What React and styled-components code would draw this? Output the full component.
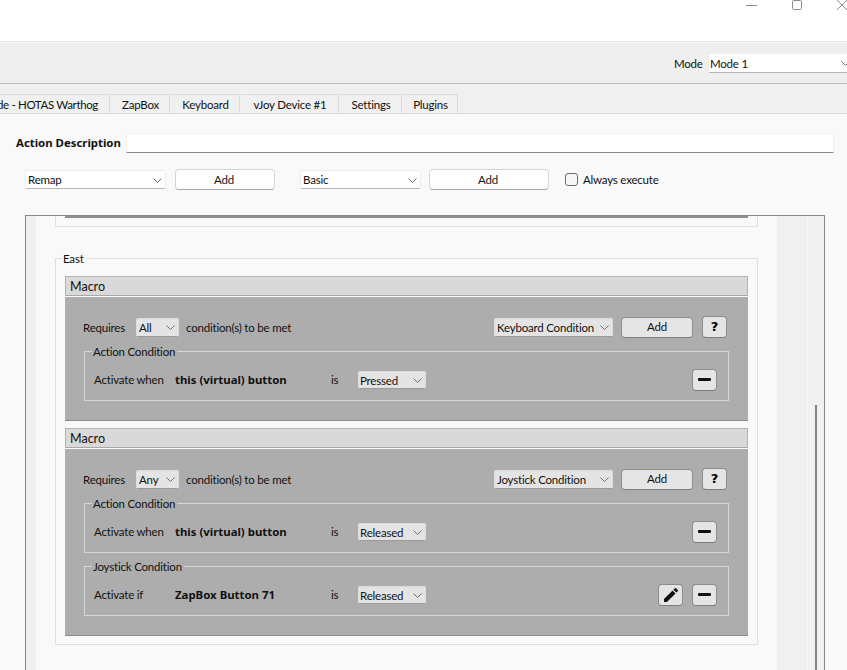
import React from "react";
import styled, { createGlobalStyle } from "styled-components";

const GlobalStyle = createGlobalStyle`
  html, body {
    margin: 0;
    padding: 0;
    background: #fff;
  }
  * {
    box-sizing: border-box;
  }
`;

const Window = styled.div`
  display: flex;
  flex-direction: column;
  width: 847px;
  height: 670px;
  overflow: hidden;
  background: #fff;
  color: #111;
  font-family: "Lato", "Noto Sans", sans-serif;
  font-size: 11.5px;
  letter-spacing: -0.2px;
  line-height: 16px;
`;

const TitleBar = styled.div`
  flex: none;
  display: flex;
  justify-content: flex-end;
  height: 42px;
  gap: 35px;
  border-bottom: 1px solid #e9e9e9;
`;

const TitleIcon = styled.svg`
  display: block;
  width: ${props => props.$w}px;
  height: 12px;
  flex: none;
  stroke: #8c8c8c;
  stroke-width: 1;
  fill: none;
`;

const Toolbar = styled.div`
  flex: none;
  display: flex;
  align-items: flex-start;
  height: 42px;
  padding: 10px 0 0 674px;
  gap: 7px;
  background: #efefef;
  border-top: 1px solid #f8f8f8;
  border-bottom: 1px solid #bcbcbc;
`;

const ModeLabel = styled.span`
  flex: none;
  width: 27px;
  line-height: 21px;
`;

const TabStrip = styled.div`
  flex: none;
  display: flex;
  align-items: flex-end;
  height: 29px;
  background: #f0f0f0;
`;

const Tab = styled.div`
  display: flex;
  align-items: center;
  justify-content: center;
  width: ${props => props.$w}px;
  height: 19px;
  margin-left: 1px;
  padding: 1px 0 0 1px;
  background: #f0f0f0;
  border: 1px solid #dcdcdc;
  border-bottom: 0;
  border-left: 0;
  white-space: nowrap;
`;

const ClippedTab = styled(Tab)`
  justify-content: flex-end;
  margin-left: 0;
  padding: 1px 11px 0 0;
  letter-spacing: -0.35px;
`;

const Pane = styled.div`
  flex: 1;
  min-height: 0;
  display: flex;
  flex-direction: column;
  background: #f9f9f9;
  border-top: 1px solid #dadada;
  padding-top: 19px;
`;

const DescriptionRow = styled.div`
  display: flex;
  align-items: center;
  height: 20px;
  padding-left: 16px;
`;

const BoldLabel = styled.span`
  display: block;
  width: ${props => props.$w || 110}px;
  flex: none;
  font-family: "Noto Sans", sans-serif;
  font-size: 11.4px;
  font-weight: 700;
  letter-spacing: 0;
  white-space: nowrap;
`;

const DescriptionInput = styled.div`
  width: 708px;
  height: 20px;
  background: #fff;
  border: 1px solid #f0f0f0;
  border-bottom: 1px solid #8a8a8a;
  border-radius: 2px 2px 0 0;
`;

const AddRow = styled.div`
  display: flex;
  align-items: center;
  height: 21px;
  margin-top: 16px;
  padding-left: 25px;
`;

const DropDown = styled.div`
  flex: none;
  display: flex;
  align-items: center;
  justify-content: space-between;
  width: ${props => props.$w}px;
  height: ${props => props.$h || 19}px;
  margin-left: ${props => props.$ml || 0}px;
  padding: ${props => props.$pt || 1}px 3px 0 ${props => props.$pl || 2}px;
  background: ${props => (props.$flat ? "#e4e4e4" : "#fff")};
  border: 1px solid ${props => (props.$flat ? "#dcdcdc" : "#ececec")};
  border-bottom-color: ${props => (props.$flat ? "#9a9a9a" : "#b5b5b5")};
  border-radius: 2px;
  white-space: nowrap;
`;

const Chevron = styled.svg`
  flex: none;
  width: 9px;
  height: 5px;
  stroke: #707070;
  stroke-width: 1;
  fill: none;
`;

const Button = styled.div`
  flex: none;
  display: flex;
  align-items: center;
  justify-content: center;
  width: ${props => props.$w}px;
  height: ${props => props.$h || 22}px;
  margin-left: ${props => props.$ml || 0}px;
  padding-right: ${props => (props.$flat ? 0 : 2)}px;
  background: ${props => (props.$flat ? "#e5e5e5" : "#fff")};
  border: 1px solid ${props => (props.$flat ? "#8e8e8e" : "#d4d4d4")};
  border-bottom-color: ${props => (props.$flat ? "#7d7d7d" : "#a6a6a6")};
  border-radius: 4px;
`;

const CheckBox = styled.div`
  flex: none;
  width: 13px;
  height: 13px;
  margin: 0 5px 0 16px;
  background: #f6f6f6;
  border: 1px solid #6c6c6c;
  border-radius: 3px;
`;

const ScrollFrame = styled.div`
  flex: none;
  display: flex;
  width: 800px;
  height: 460px;
  margin: 25px 0 0 25px;
  background: #f0f0f0;
  border: 1px solid #87878c;
  border-bottom: 0;
`;

const Gutter = styled.div`
  flex: none;
  width: 10px;
`;

const Viewport = styled.div`
  flex: none;
  width: 741px;
  padding-left: 19px;
  background: #f9f9f9;
`;

const ScrollBar = styled.div`
  flex: none;
  position: relative;
  width: 47px;
`;

const ScrollDivider = styled.div`
  position: absolute;
  top: 0;
  bottom: 0;
  left: 30px;
  width: 1px;
  background: #fafafa;
`;

const ScrollThumb = styled.div`
  position: absolute;
  top: 189px;
  bottom: 0;
  left: 38px;
  width: 2px;
  background: #858585;
`;

const PreviousGroup = styled.div`
  width: 703px;
  height: 11px;
  padding: 0 9px;
  border: 1px solid #e0e0e0;
  border-top: 0;
`;

const PreviousBar = styled.div`
  height: 2px;
  background: #8f8f8f;
`;

const GroupBox = styled.div`
  position: relative;
  width: 703px;
  height: 387px;
  margin-top: 31px;
  padding: 17px 9px 0;
  border: 1px solid #e0e0e0;
`;

const Legend = styled.span`
  position: absolute;
  top: -8px;
  left: ${props => props.$left || 7}px;
  padding: 0 2px 0 1px;
  background: ${props => props.$bg || "#f9f9f9"};
  white-space: nowrap;
`;

const MacroHeader = styled.div`
  display: flex;
  align-items: center;
  height: 20px;
  margin-top: ${props => props.$mt || 0}px;
  padding: 1px 0 0 4px;
  font-size: 12.5px;
  letter-spacing: 0;
  background: #d9d9d9;
  border: 1px solid #b4b4b4;
  border-bottom-color: #a8a8a8;
`;

const MacroPanel = styled.div`
  height: ${props => props.$h}px;
  margin-top: 1px;
  padding: 19px 19px 0 18px;
  background: #adadad;
  border-bottom: 1px solid #8b8b8b;
`;

const RequiresRow = styled.div`
  display: flex;
  align-items: center;
  height: 22px;
  margin-right: 2px;
`;

const RequiresLabel = styled.span`
  flex: none;
  width: 53px;
  padding-top: 1px;
`;

const ConditionText = styled.span`
  flex: 1;
  margin-left: 7px;
  padding-top: 1px;
`;

const ConditionGroup = styled.div`
  position: relative;
  display: flex;
  align-items: center;
  height: 50px;
  margin: ${props => props.$mt}px 0 0 1px;
  padding: 7px 11px 0 9px;
  border: 1px solid #d6d6d6;
`;

const ActivateLabel = styled.span`
  flex: none;
  width: 81px;
  padding-top: 1px;
`;

const IsLabel = styled.span`
  flex: none;
  width: 27px;
  padding-top: 1px;
`;

const ButtonGroup = styled.div`
  display: flex;
  gap: 9px;
  margin-left: auto;
`;

const HelpMark = styled.span`
  font-family: "DejaVu Sans", sans-serif;
  font-size: 13px;
  font-weight: 700;
  color: #000;
`;

const MinusMark = styled.span`
  display: block;
  width: 13px;
  height: 3px;
  border-radius: 1px;
  background: #111;
`;

const ChevronDown = () => (
  <Chevron viewBox="0 0 9 5">
    <path d="M0.5 0.5 L4.5 4.5 L8.5 0.5" />
  </Chevron>
);

const Select = ({ children, ...props }) => (
  <DropDown {...props}>
    <span>{children}</span>
    <ChevronDown />
  </DropDown>
);

const Pencil = () => (
  <svg width="14" height="14" viewBox="3 3 18 18" fill="#111">
    <path d="M3 17.25V21h3.75L17.81 9.94l-3.75-3.75L3 17.25z" />
    <path d="M20.71 7.04a1 1 0 0 0 0-1.41l-2.34-2.34a1 1 0 0 0-1.41 0l-1.83 1.83 3.75 3.75 1.83-1.83z" />
  </svg>
);

function Condition({ title, mt, label, subject, state, editable }) {
  return (
    <ConditionGroup $mt={mt}>
      <Legend $bg="#adadad">{title}</Legend>
      <ActivateLabel>{label}</ActivateLabel>
      <BoldLabel $w={156}>{subject}</BoldLabel>
      <IsLabel>is</IsLabel>
      <Select $w={68} $h={18} $pt={2} $pl={1} $flat>
        {state}
      </Select>
      <ButtonGroup>
        {editable ? (
          <Button $w={25} $flat>
            <Pencil />
          </Button>
        ) : null}
        <Button $w={25} $flat>
          <MinusMark />
        </Button>
      </ButtonGroup>
    </ConditionGroup>
  );
}

function Requires({ mode, kind }) {
  return (
    <RequiresRow>
      <RequiresLabel>Requires</RequiresLabel>
      <Select $w={43} $flat>
        {mode}
      </Select>
      <ConditionText>condition(s) to be met</ConditionText>
      <Select $w={119} $flat>
        {kind}
      </Select>
      <Button $w={72} $h={21} $ml={8} $flat>
        Add
      </Button>
      <Button $w={25} $ml={9} $flat>
        <HelpMark>?</HelpMark>
      </Button>
    </RequiresRow>
  );
}

export default function App() {
  return (
    <Window>
      <GlobalStyle />
      <TitleBar>
        <TitleIcon $w={11} viewBox="0 0 11 12">
          <path d="M0 5.5 H11" />
        </TitleIcon>
        <TitleIcon $w={10} viewBox="0 0 10 12">
          <rect x="0.5" y="0.5" width="9" height="9" rx="1" />
        </TitleIcon>
        <TitleIcon $w={10} viewBox="0 0 10 12">
          <path d="M0 0 L10 10 M10 0 L0 10" />
        </TitleIcon>
      </TitleBar>
      <Toolbar>
        <ModeLabel>Mode</ModeLabel>
        <Select $w={146} $h={20} $pl={1}>
          Mode 1
        </Select>
      </Toolbar>
      <TabStrip>
        <ClippedTab $w={110}>de - HOTAS Warthog</ClippedTab>
        <Tab $w={59}>ZapBox</Tab>
        <Tab $w={69}>Keyboard</Tab>
        <Tab $w={98}>vJoy Device #1</Tab>
        <Tab $w={62}>Settings</Tab>
        <Tab $w={55}>Plugins</Tab>
      </TabStrip>
      <Pane>
        <DescriptionRow>
          <BoldLabel>Action Description</BoldLabel>
          <DescriptionInput />
        </DescriptionRow>
        <AddRow>
          <Select $w={141}>Remap</Select>
          <Button $w={100} $h={21} $ml={9}>Add</Button>
          <Select $w={121} $ml={25}>Basic</Select>
          <Button $w={120} $h={21} $ml={8}>Add</Button>
          <CheckBox />
          <span>Always execute</span>
        </AddRow>
        <ScrollFrame>
          <Gutter />
          <Viewport>
            <PreviousGroup>
              <PreviousBar />
            </PreviousGroup>
            <GroupBox>
              <Legend $left={6}>East</Legend>
              <MacroHeader>Macro</MacroHeader>
              <MacroPanel $h={124}>
                <Requires mode="All" kind="Keyboard Condition" />
                <Condition
                  mt={13}
                  title="Action Condition"
                  label="Activate when"
                  subject="this (virtual) button"
                  state="Pressed"
                />
              </MacroPanel>
              <MacroHeader $mt={7}>Macro</MacroHeader>
              <MacroPanel $h={187}>
                <Requires mode="Any" kind="Joystick Condition" />
                <Condition
                  mt={13}
                  title="Action Condition"
                  label="Activate when"
                  subject="this (virtual) button"
                  state="Released"
                />
                <Condition
                  mt={13}
                  title="Joystick Condition"
                  label="Activate if"
                  subject="ZapBox Button 71"
                  state="Released"
                  editable
                />
              </MacroPanel>
            </GroupBox>
          </Viewport>
          <ScrollBar>
            <ScrollDivider />
            <ScrollThumb />
          </ScrollBar>
        </ScrollFrame>
      </Pane>
    </Window>
  );
}
